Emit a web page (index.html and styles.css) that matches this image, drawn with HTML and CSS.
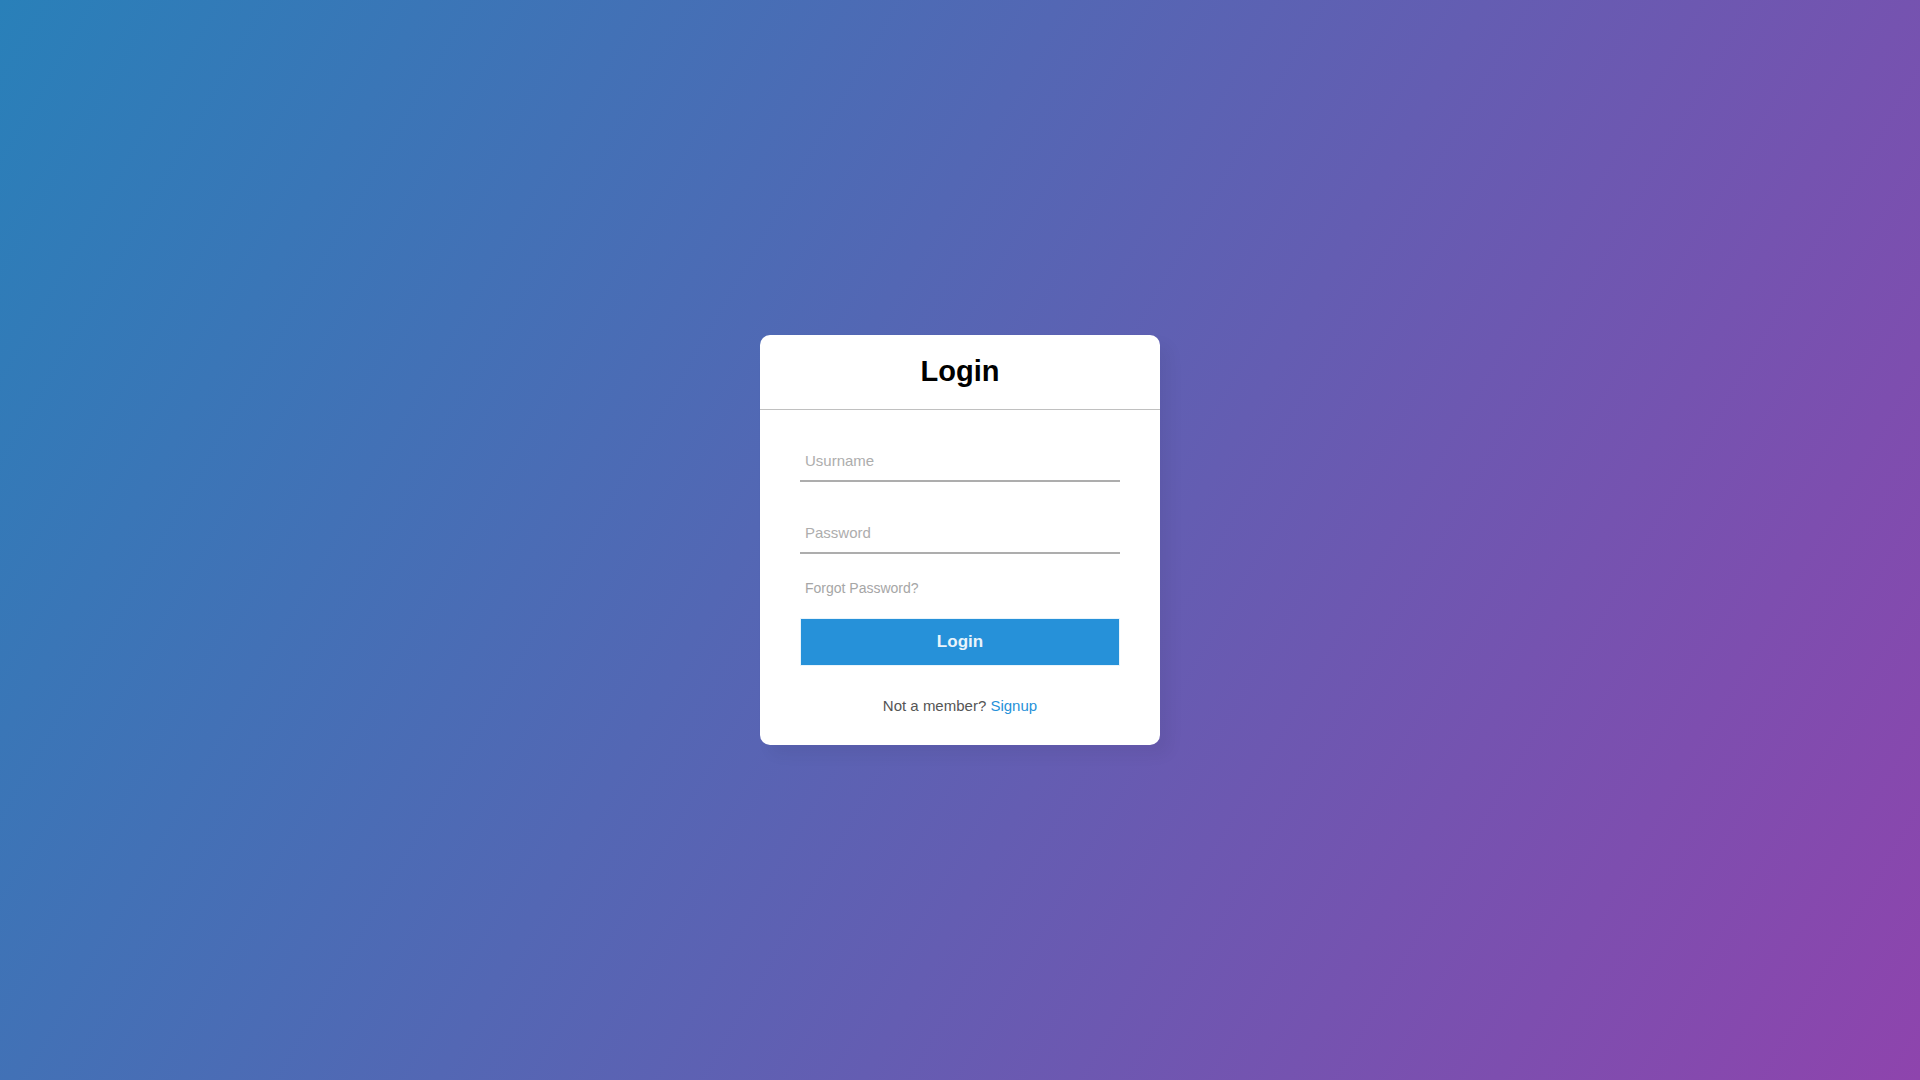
FILE: index.html
```
<!DOCTYPE html>
<html lang="en">
<head>
<meta charset="utf-8">
<title>Login</title>
<link rel="stylesheet" href="styles.css">
</head>
<body>
<div class="center">
  <h1>Login</h1>
  <form>
    <div class="txt-field">
      <input type="text" placeholder="Usurname">
    </div>
    <div class="txt-field">
      <input type="password" placeholder="Password">
    </div>
    <div class="pass">Forgot Password?</div>
    <button type="button" class="submit">Login</button>
    <div class="signup-link">Not a member? <a href="#">Signup</a></div>
  </form>
</div>
</body>
</html>
```
FILE: styles.css
```
* { box-sizing: border-box; }
html, body { margin: 0; padding: 0; }
body {
  height: 100vh;
  font-family: "Liberation Sans", Arial, sans-serif;
  background: linear-gradient(120deg, #2980b9, #8e44ad);
  display: flex;
  align-items: center;
  justify-content: center;
}
.center {
  width: 400px;
  background: #fff;
  border-radius: 10px;
  box-shadow: 10px 10px 15px rgba(0, 0, 0, 0.05);
}
.center h1 {
  margin: 0;
  padding: 19px 0 20px;
  line-height: 35px;
  font-size: 29px;
  font-weight: 700;
  color: #000;
  text-align: center;
  border-bottom: 1px solid #c0c0c0;
}
form {
  padding: 0 40px;
  display: flow-root;
}
.txt-field {
  border-bottom: 2px solid #adadad;
  margin: 30px 0;
}
.txt-field input {
  display: block;
  width: 100%;
  height: 40px;
  padding: 0 5px;
  border: none;
  background: none;
  outline: none;
  font-family: inherit;
  font-size: 15px;
  color: #333;
}
.txt-field input::placeholder { color: #adadad; }
.pass {
  margin: -5px 0 20px 5px;
  line-height: 19px;
  font-size: 14px;
  color: #a6a6a6;
}
.submit {
  display: block;
  width: 100%;
  height: 48px;
  border: 1px solid #e9f4fb;
  background: #2691d9;
  color: #e9f4fb;
  font-family: inherit;
  font-size: 17px;
  font-weight: 700;
  padding: 0;
}
.signup-link {
  margin: 30px 0;
  text-align: center;
  font-size: 15px;
  line-height: 19px;
  color: #555;
}
.signup-link a {
  color: #2691d9;
  text-decoration: none;
}
```
